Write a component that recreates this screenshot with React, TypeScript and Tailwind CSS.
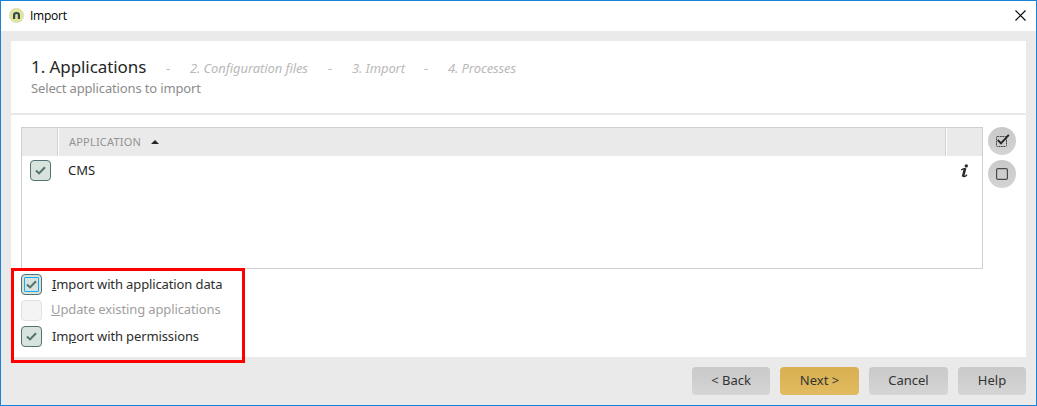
import type { ReactNode } from 'react';

const STEPS = [
  { label: '2. Configuration files', width: 'w-[118px]' },
  { label: '3. Import', width: 'w-[52px]' },
  { label: '4. Processes', width: 'w-[68px]' },
];

const BUTTONS = [
  { label: '< Back', width: 'w-[78px]', primary: false },
  { label: 'Next >', width: 'w-[79px]', primary: true },
  { label: 'Cancel', width: 'w-[79px]', primary: false },
  { label: 'Help', width: 'w-[68px]', primary: false },
];

interface CheckboxProps {
  checked?: boolean;
  focused?: boolean;
  disabled?: boolean;
}

function Checkbox({ checked = false, focused = false, disabled = false }: CheckboxProps) {
  return (
    <span
      role="checkbox"
      aria-checked={checked}
      aria-disabled={disabled}
      className={`flex h-[21px] w-[21px] shrink-0 items-center justify-center rounded-[4px] border ${
        disabled ? 'border-[#e1e1e1] bg-[#f4f4f4]' : 'border-[#527370] bg-[#d8e3de]'
      }`}
    >
      {checked && (
        <span
          className={`flex h-[15px] w-[15px] items-center justify-center ${
            focused ? 'rounded-[1px] border border-[#18a8f0]' : ''
          }`}
        >
          <svg width="11" height="9" viewBox="0 0 11 9" className="shrink-0">
            <path d="M1 4.6 4 7.4 10 1.2" fill="none" stroke="#527370" strokeWidth="2.1" />
          </svg>
        </span>
      )}
    </span>
  );
}

interface OptionProps extends CheckboxProps {
  children: ReactNode;
}

function Option({ children, ...box }: OptionProps) {
  return (
    <label className="flex h-[21px] items-center">
      <Checkbox {...box} />
      <span
        className={`leading-[18px] tracking-[-0.12px] ${
          box.disabled ? 'ml-[9px] pb-1 text-[#a0a0a0]' : 'ml-[10px] pb-[2px] text-[#2d2d2d]'
        }`}
      >
        {children}
      </span>
    </label>
  );
}

function AppLogo() {
  return (
    <svg width="15" height="15" viewBox="0 0 15 15" className="-mt-[2px]">
      <circle cx="7.5" cy="7.5" r="7.2" fill="#e3e59a" stroke="#d4d8ba" strokeWidth=".6" />
      <path d="M5.1 11V6.9Q5.1 5 7.5 5T9.9 6.9V11" fill="none" stroke="#34484d" strokeWidth="2.2" />
    </svg>
  );
}

function RoundButton({ label, children }: { label: string; children: ReactNode }) {
  return (
    <button
      aria-label={label}
      className="flex h-7 w-7 items-center justify-center rounded-full bg-linear-to-b from-[#c9c9c9] to-[#d4d4d4]"
    >
      {children}
    </button>
  );
}

function Header() {
  return (
    <header className="h-[74px] border-b-2 border-[#e8e8e8] pl-5 pt-[14px]">
      <div className="flex h-6 items-center">
        <h1 className="w-[115px] text-[17px] leading-6 tracking-[-0.07px] text-[#262626]">1. Applications</h1>
        <div className="ml-5 flex items-center pt-[2px] text-[13px] leading-[18px] tracking-[-0.1px] text-[#b9b9b9]">
          {STEPS.map((step, i) => (
            <div key={step.label} className={`flex ${i > 0 ? 'ml-5' : ''}`}>
              <span className="w-[5px]">-</span>
              <span className={`ml-[19px] italic ${step.width}`}>{step.label}</span>
            </div>
          ))}
        </div>
      </div>
      <p className="text-[13px] leading-[18px] tracking-[-0.14px] text-[#8c8c8c]">Select applications to import</p>
    </header>
  );
}

function ApplicationTable() {
  return (
    <div className="h-[142px] w-[962px] border border-[#cfcfcf]">
      <div className="flex h-7 items-center bg-[#eaeaea] text-[11px] text-[#939393]">
        <div className="h-full w-9 border-r border-[#d0d0d0]" />
        <div className="flex h-full flex-1 items-center border-l border-white pl-[10px]">
          <span className="w-[73px] tracking-[0.2px]">APPLICATION</span>
          <svg width="8" height="4" viewBox="0 0 8 4" className="ml-[9px]">
            <path d="M0 4 4 0 8 4Z" fill="#262626" />
          </svg>
        </div>
        <div className="h-full w-[37px] border-l border-[#d0d0d0]">
          <div className="h-full border-l border-white" />
        </div>
      </div>
      <div className="flex h-[29px] items-center pl-2">
        <Checkbox checked />
        <span className="ml-[17px] flex-1 text-[13px] text-[#1f1f1f]">CMS</span>
        <svg width="9" height="14" viewBox="0 0 9 14" className="mr-[13px]">
          <circle cx="6.3" cy="1.9" r="1.7" fill="#2b2b2b" />
          <path
            d="M1.2 5.8Q3.5 4.6 5.5 4.4M3.2 12.4Q5 13.4 7 10.6"
            fill="none"
            stroke="#2b2b2b"
            strokeWidth="1.3"
          />
          <path d="M5.1 4.2 3 12.8" stroke="#2b2b2b" strokeWidth="2.6" />
        </svg>
      </div>
    </div>
  );
}

export default function App() {
  return (
    <div className="relative flex h-[406px] w-[1037px] flex-col overflow-hidden whitespace-nowrap border border-[#1883d7] bg-[#eaeaea] font-['Noto_Sans',sans-serif] text-[13px]">
      <div className="flex h-[30px] shrink-0 items-center bg-white pl-2 pr-[10px]">
        <AppLogo />
        <span className="ml-[6px] flex-1 font-['Open_Sans',sans-serif] text-[12px] tracking-[-0.25px] text-black">
          Import
        </span>
        <svg width="11" height="11" viewBox="0 0 11 11" className="-mt-[2px]">
          <path d="m.5.5 10 10m0-10-10 10" stroke="#000" strokeWidth="1.1" />
        </svg>
      </div>

      <main className="mx-[10px] mt-[10px] h-[316px] w-[1015px] shrink-0 bg-white">
        <Header />
        <div className="flex px-[10px] pt-3">
          <ApplicationTable />
          <div className="ml-[5px] flex flex-col gap-[5px]">
            <RoundButton label="Select all">
              <svg width="15" height="14" viewBox="0 0 15 14">
                <rect x="1.5" y="2.5" width="10" height="10" rx="1" fill="none" stroke="#444" strokeDasharray="1.8 .6" />
                <path d="M2.8 6 6 9.4 13.8 .8" fill="none" stroke="#292929" strokeWidth="2" />
              </svg>
            </RoundButton>
            <RoundButton label="Deselect all">
              <svg width="12" height="12" viewBox="0 0 12 12">
                <rect x=".6" y=".6" width="10.8" height="10.8" rx="1.4" fill="none" stroke="#4a4a4a" strokeWidth="1.2" />
              </svg>
            </RoundButton>
          </div>
        </div>
        <div className="flex flex-col gap-[5px] pl-[10px] pt-[5px]">
          <Option checked focused>
            <u>I</u>mport with application data
          </Option>
          <Option disabled>
            <u>U</u>pdate existing applications
          </Option>
          <Option checked>
            Im<u>p</u>ort with permissions
          </Option>
        </div>
      </main>

      <footer className="flex justify-end gap-[10px] pr-[10px] pt-[10px]">
        {BUTTONS.map(button => (
          <button
            key={button.label}
            className={`h-7 rounded-[4px] bg-linear-to-b text-[13px] text-[#333] ${button.width} ${
              button.primary ? 'from-[#d8b052] to-[#e1bb60]' : 'from-[#c9c9c9] to-[#d5d5d5]'
            }`}
          >
            {button.label}
          </button>
        ))}
      </footer>

      {/* Highlight around the import options */}
      <div className="absolute left-[10px] top-[267px] h-[95px] w-[234px] border-[3px] border-[#ff0000]" />
    </div>
  );
}
